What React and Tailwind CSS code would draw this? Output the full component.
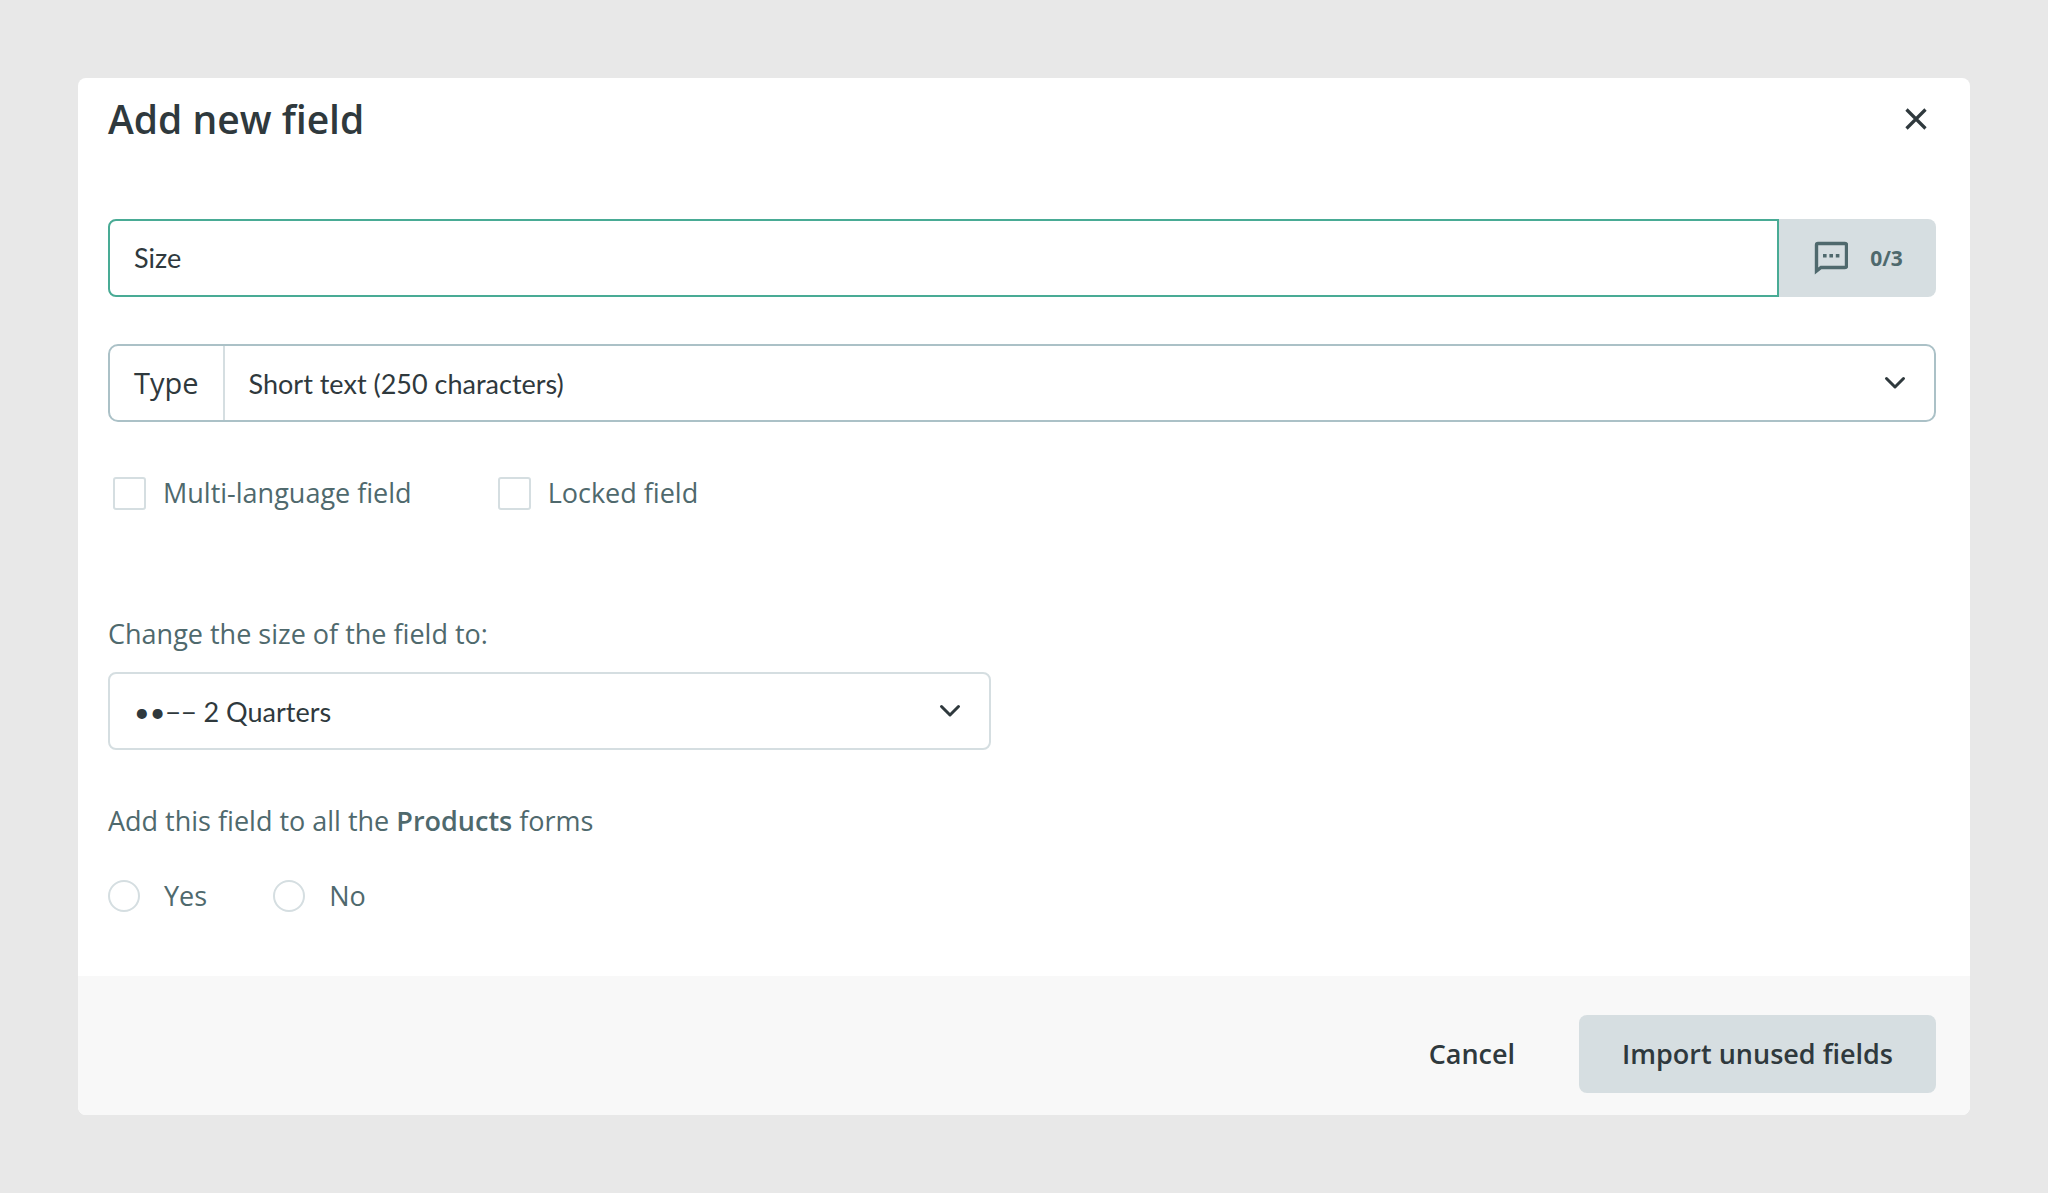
import { useState } from "react";

const Chevron = () => (
    <svg className="pointer-events-none col-start-1 row-start-1 mr-[27px] h-6 w-6 justify-self-end" viewBox="0 0 24 24" fill="none" stroke="#2f393d" strokeWidth="3" strokeLinecap="round" strokeLinejoin="round">
        <path d="M3.5 7.5L12 16L20.5 7.5" />
    </svg>
)

const Checkbox = ({ label, checked, onChange }) => (
    <label className="flex items-center gap-[17px]">
        <input type="checkbox" checked={checked} onChange={onChange}
            className="h-[33px] w-[33px] appearance-none rounded-[3px] border-2 border-[#d5dee1] bg-white checked:bg-[#49ab95]" />
        {label}
    </label>
)

const Radio = ({ label, value, selected, onSelect }) => (
    <label className="flex items-center gap-6">
        <input type="radio" name="addToForms" value={value} checked={selected === value} onChange={() => onSelect(value)}
            className="h-8 w-8 appearance-none rounded-full border-2 border-[#d5dee1] bg-white checked:border-8 checked:border-[#49ab95]" />
        {label}
    </label>
)

const App = () => {

    const [name, setName] = useState("Size")
    const [type, setType] = useState("short")
    const [multiLanguage, setMultiLanguage] = useState(false)
    const [locked, setLocked] = useState(false)
    const [size, setSize] = useState("2")
    const [addToForms, setAddToForms] = useState("")

    return (

        <div className="min-h-screen bg-[#e8e8e8] p-[78px] font-['Open_Sans',sans-serif] text-[27px] leading-10 text-[#4f696d]">

            <div role="dialog" aria-labelledby="dialog-title" className="overflow-hidden rounded-lg bg-white">

                <div className="flex items-center justify-between pt-[15px] pr-10 pl-[30px] text-[#2f393d]">
                    <h1 id="dialog-title" className="text-[39px] leading-[52px] font-semibold">Add new field</h1>
                    <button type="button" aria-label="Close" className="p-0.5">
                        <svg className="h-6 w-6" viewBox="0 0 24 24" fill="none" stroke="currentColor" strokeWidth="3.2">
                            <path d="M2.5 2.5L21.5 21.5M21.5 2.5L2.5 21.5" />
                        </svg>
                    </button>
                </div>

                <form className="pt-[74px] pr-[34px] pb-[60px] pl-[30px]">

                    <div className="flex h-[78px]">
                        <input type="text" aria-label="Field name" value={name} onChange={(e) => setName(e.target.value)}
                            className="min-w-0 flex-1 rounded-l-lg border-2 border-[#49ab95] px-6 font-['Lato',sans-serif] text-[#2f393d] outline-none" />
                        <button type="button" aria-label="Translations 0/3" className="flex w-[157px] items-center justify-center gap-[22px] rounded-r-lg bg-[#d6dee1] pl-0.5 text-[21px] font-bold">
                            <svg className="h-[34px] w-[34px]" viewBox="0 0 34 34" fill="none">
                                <path d="M2.5 30V4Q2.5 2.5 4 2.5H31Q32.5 2.5 32.5 4V25Q32.5 26.5 31 26.5H7Z" stroke="#4f696d" strokeWidth="3.4" />
                                <path d="M9 13h3.6v3.6H9zM15.4 13H19v3.6h-3.6zM21.8 13h3.6v3.6h-3.6z" fill="#4f696d" />
                            </svg>
                            0/3
                        </button>
                    </div>

                    <div className="mt-[47px] flex h-[78px] rounded-[10px] border-2 border-[#abc1c7] text-[#2f393d]">
                        <label htmlFor="type" className="flex items-center border-r-2 border-[#d5dee1] px-6 text-[29px]">Type</label>
                        <div className="grid flex-1 items-center">
                            <select id="type" value={type} onChange={(e) => setType(e.target.value)}
                                className="col-start-1 row-start-1 h-full w-full appearance-none px-6 pt-0.5 font-['Lato',sans-serif]">
                                <option value="short">Short text (250 characters)</option>
                                <option value="long">Long text</option>
                            </select>
                            <Chevron />
                        </div>
                    </div>

                    <div className="mt-[51px] flex gap-[86px] pl-[5px]">
                        <Checkbox label="Multi-language field" checked={multiLanguage} onChange={(e) => setMultiLanguage(e.target.checked)} />
                        <Checkbox label="Locked field" checked={locked} onChange={(e) => setLocked(e.target.checked)} />
                    </div>

                    <label htmlFor="size" className="mt-[101px] block">Change the size of the field to:</label>

                    <div className="mt-[18px] grid h-[78px] w-[883px] max-w-full items-center rounded-lg border-2 border-[#d5dee1] text-[#2f393d]">
                        <select id="size" value={size} onChange={(e) => setSize(e.target.value)}
                            className="col-start-1 row-start-1 h-full w-full appearance-none px-6 pt-0.5 font-['Lato',sans-serif]">
                            <option value="1">•−−− 1 Quarter</option>
                            <option value="2">••−− 2 Quarters</option>
                            <option value="3">•••− 3 Quarters</option>
                            <option value="4">•••• 4 Quarters</option>
                        </select>
                        <Chevron />
                    </div>

                    <fieldset className="mt-[51px]">
                        <legend>Add this field to all the <b className="font-semibold">Products</b> forms</legend>
                        <div className="mt-[35px] flex gap-[66px]">
                            <Radio label="Yes" value="yes" selected={addToForms} onSelect={setAddToForms} />
                            <Radio label="No" value="no" selected={addToForms} onSelect={setAddToForms} />
                        </div>
                    </fieldset>

                </form>

                <div className="flex justify-end gap-6 bg-[#f8f8f8] pt-[39px] pr-[34px] pb-[22px] font-semibold text-[#2f393d]">
                    <button type="button" className="px-10">Cancel</button>
                    <button type="button" className="h-[78px] rounded-lg bg-[#d6dee1] px-[43px]">Import unused fields</button>
                </div>

            </div>

        </div>
    );
}

export default App
